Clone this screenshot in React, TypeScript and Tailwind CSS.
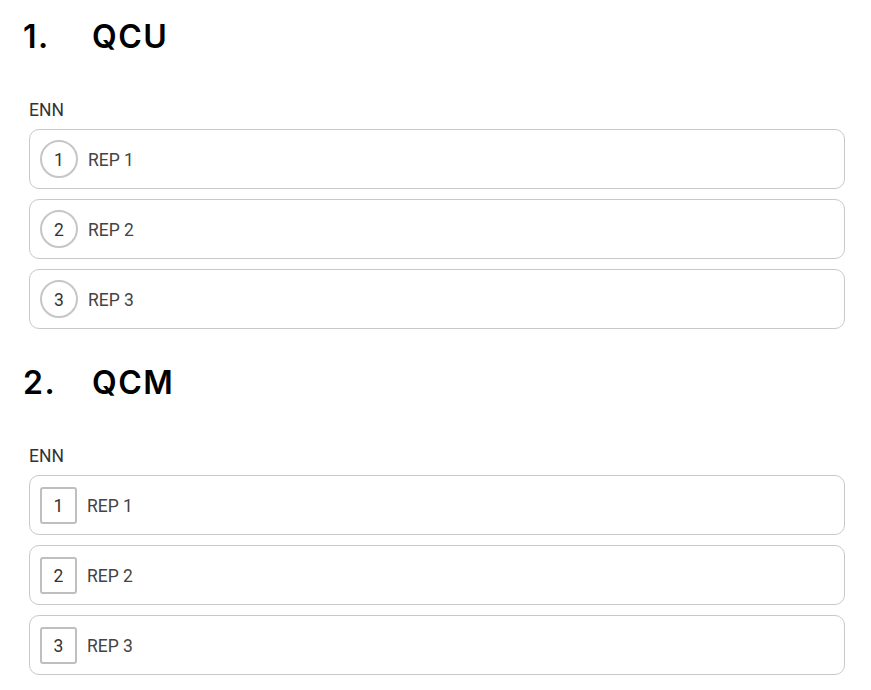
const SECTIONS = [
  { num: "1.", title: "QCU", kind: "radio" as const },
  { num: "2.", title: "QCM", kind: "check" as const },
];

const ANSWERS = ["REP 1", "REP 2", "REP 3"];

function Choice({ idx, label, kind }: { idx: number; label: string; kind: "radio" | "check" }) {
  return (
    <div className="flex h-[60px] items-center rounded-[10px] border border-[#c9c9c9] bg-white pl-[10px]">
      <span
        className={
          kind === "radio"
            ? "flex h-[38px] w-[38px] items-center justify-center rounded-full border-2 border-[#c6c6c6] text-[17.5px] text-[#333]"
            : "flex h-[37px] w-[37px] items-center justify-center rounded-[3px] border-2 border-[#bfbfbf] text-[17.5px] text-[#333]"
        }
      >
        <span className="translate-y-[1px]">{idx}</span>
      </span>
      <span className="ml-[10px] translate-y-[1px] text-[17.5px] text-[#444]">{label}</span>
    </div>
  );
}

export default function App() {
  return (
    <div className="min-h-screen bg-white pt-[17px] font-['Roboto',sans-serif]">
      {SECTIONS.map((s, si) => (
        <section key={s.title} className={si > 0 ? "mt-[34px]" : ""}>
          <h2 className="flex pl-[23px] font-['Inter',sans-serif] text-[32px] font-semibold leading-[40px] tracking-[1.5px] text-black">
            <span className="w-[69px]">{s.num}</span>
            <span>{s.title}</span>
          </h2>
          <div className="ml-[29px] w-[816px]">
            <p className="mt-[41px] text-[17.5px] leading-[24px] text-[#333]">ENN</p>
            <div className="mt-[7px] flex flex-col gap-[10px]">
              {ANSWERS.map((a, i) => (
                <Choice key={a} idx={i + 1} label={a} kind={s.kind} />
              ))}
            </div>
          </div>
        </section>
      ))}
    </div>
  );
}
